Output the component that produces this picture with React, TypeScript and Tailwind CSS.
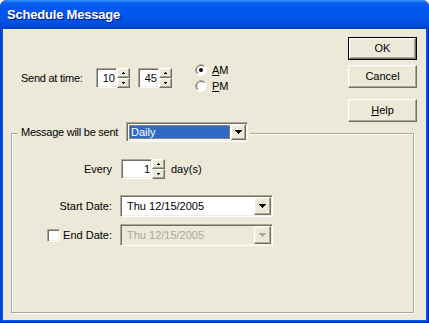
import React from "react";

const raised =
  "border border-t-white border-l-white border-r-[#716F64] border-b-[#716F64] shadow-[inset_-1px_-1px_0_#ACA899,inset_1px_1px_0_#F1EFE2] bg-[#ECE9D8]";
const sunken =
  "border border-t-[#ACA899] border-l-[#ACA899] border-r-white border-b-white shadow-[inset_1px_1px_0_#716F64,inset_-1px_-1px_0_#F1EFE2]";

function SmallArrow({ up }: { up?: boolean }) {
  return (
    <svg width="5" height="3" viewBox="0 0 5 3" shapeRendering="crispEdges">
      {up ? (
        <>
          <rect x="2" y="0" width="1" height="1" fill="#000" />
          <rect x="1" y="1" width="3" height="1" fill="#000" />
        </>
      ) : (
        <>
          <rect x="1" y="0" width="3" height="1" fill="#000" />
          <rect x="2" y="1" width="1" height="1" fill="#000" />
        </>
      )}
    </svg>
  );
}

function DownArrow({ color = "#000" }: { color?: string }) {
  return (
    <svg width="7" height="4" viewBox="0 0 7 4" shapeRendering="crispEdges">
      <rect x="0" y="0" width="7" height="1" fill={color} />
      <rect x="1" y="1" width="5" height="1" fill={color} />
      <rect x="2" y="2" width="3" height="1" fill={color} />
      <rect x="3" y="3" width="1" height="1" fill={color} />
    </svg>
  );
}

function Spin({ value, editClass }: { value: string; editClass: string }) {
  return (
    <div className="flex h-[20px]">
      <div className={`${editClass} h-full ${sunken} bg-white flex items-center justify-end pr-[1px]`}>
        {value}
      </div>
      <div className="flex flex-col w-[13px] h-full">
        <div className={`flex-1 ${raised} flex items-center justify-center`}>
          <SmallArrow up />
        </div>
        <div className={`flex-1 ${raised} flex items-center justify-center`}>
          <SmallArrow />
        </div>
      </div>
    </div>
  );
}

function Radio({ checked, children }: { checked?: boolean; children: React.ReactNode }) {
  return (
    <div className="h-[16px] flex items-center gap-[5px]">
      <svg width="12" height="12" viewBox="0 0 12 12">
        <circle cx="6" cy="6" r="5.5" fill="#fff" stroke="#fff" />
        <path d="M2.1 9.9A5.5 5.5 0 0 1 9.9 2.1" fill="none" stroke="#ACA899" />
        <path d="M2.8 9.2A4.5 4.5 0 0 1 9.2 2.8" fill="none" stroke="#716F64" />
        {checked && <circle cx="6" cy="6" r="2" fill="#000" />}
      </svg>
      <span>{children}</span>
    </div>
  );
}

function Btn({ children, def, className = "" }: { children: React.ReactNode; def?: boolean; className?: string }) {
  if (def) {
    return (
      <div className={`w-[69px] h-[23px] border border-black ${className}`}>
        <div className={`w-full h-full ${raised} flex items-center justify-center`}>{children}</div>
      </div>
    );
  }
  return (
    <div className={`w-[69px] h-[23px] ${raised} flex items-center justify-center ${className}`}>{children}</div>
  );
}

function DateCombo({ disabled }: { disabled?: boolean }) {
  return (
    <div
      className={`w-[153px] h-[22px] ${sunken} ${
        disabled ? "bg-[#ECE9D8] text-[#ACA899]" : "bg-white"
      } flex items-center p-[1px]`}
    >
      <span className="flex-1 pl-[5px]">Thu 12/15/2005</span>
      <div className={`w-[17px] h-full ${raised} flex items-center justify-center`}>
        <DownArrow color={disabled ? "#ACA899" : "#000"} />
      </div>
    </div>
  );
}

function DailyCombo() {
  return (
    <div className={`w-[122px] h-[20px] ${sunken} bg-white flex items-stretch p-[1px]`}>
      <div className="flex-1 m-[1px] bg-[#316AC5] border border-dotted border-[#CE953A] text-white flex items-center pl-[1px]">
        Daily
      </div>
      <div className={`w-[15px] ${raised} flex items-center justify-center`}>
        <DownArrow />
      </div>
    </div>
  );
}

export default function App() {
  return (
    <div className="w-[429px] h-[323px] bg-white font-['Liberation_Sans',Arial,sans-serif] text-[11px] text-black leading-none">
      <div className="flex flex-col w-full h-full rounded-t-[7px] overflow-hidden bg-[#0054E3] shadow-[inset_1px_0_0_#0831D9,inset_-1px_0_0_#001EA0,inset_0_-1px_0_#001EA0]">
        <div className="h-[29px] shrink-0 flex items-center pl-[7px] pb-[1px] bg-[linear-gradient(to_bottom,#3D95FF_0px,#0A5FEE_3px,#0058EE_8px,#0055E8_18px,#0050E0_23px,#0046D0_27px,#003FC4_29px)]">
          <span className="text-white font-bold text-[13px] tracking-[-0.2px] [text-shadow:1px_1px_0_#0A1883]">
            Schedule Message
          </span>
        </div>
        <div className="flex-1 mx-[3px] mb-[3px] bg-[#ECE9D8] flex flex-col pl-[8px] pr-[9px] pb-[7px]">
          <div className="flex justify-between shrink-0">
            <div className="flex items-center pt-[33px] pl-[10px] self-start">
              <span className="w-[75px] tracking-[-0.25px]">Send at time:</span>
              <Spin value="10" editClass="w-[21px]" />
              <div className="ml-[8px]">
                <Spin value="45" editClass="w-[21px]" />
              </div>
              <div className="ml-[23px] flex flex-col">
                <Radio checked>
                  <span className="underline">A</span>M
                </Radio>
                <Radio>
                  <span className="underline">P</span>M
                </Radio>
              </div>
            </div>
            <div className="flex flex-col pt-[8px]">
              <Btn def>OK</Btn>
              <Btn className="mt-[5px]">Cancel</Btn>
              <Btn className="mt-[11px]">
                <span>
                  <span className="underline">H</span>elp
                </span>
              </Btn>
            </div>
          </div>

          <div className="flex-1 mt-[11px] mr-[3px] border border-[#ACA899] shadow-[1px_1px_0_#fff,inset_1px_1px_0_#fff] flex flex-col">
            <div className="-mt-[12px] ml-[6px] self-start flex items-center bg-[#ECE9D8] pl-[3px] pr-[2px]">
              <span className="w-[105px] tracking-[-0.25px]">Message will be sent</span>
              <DailyCombo />
            </div>

            <div className="mt-[17px] flex items-center">
              <span className="w-[100px] text-right">Every</span>
              <div className="ml-[9px]">
                <Spin value="1" editClass="w-[31px]" />
              </div>
              <span className="ml-[6px]">day(s)</span>
            </div>

            <div className="mt-[16px] flex items-center">
              <span className="w-[100px] text-right">Start Date:</span>
              <div className="ml-[8px]">
                <DateCombo />
              </div>
            </div>

            <div className="mt-[7px] flex items-center">
              <div className="w-[100px] flex items-center">
                <div className={`ml-[35px] w-[13px] h-[13px] bg-white ${sunken}`} />
                <span className="flex-1 text-right">End Date:</span>
              </div>
              <div className="ml-[8px]">
                <DateCombo disabled />
              </div>
            </div>
          </div>
        </div>
      </div>
    </div>
  );
}
